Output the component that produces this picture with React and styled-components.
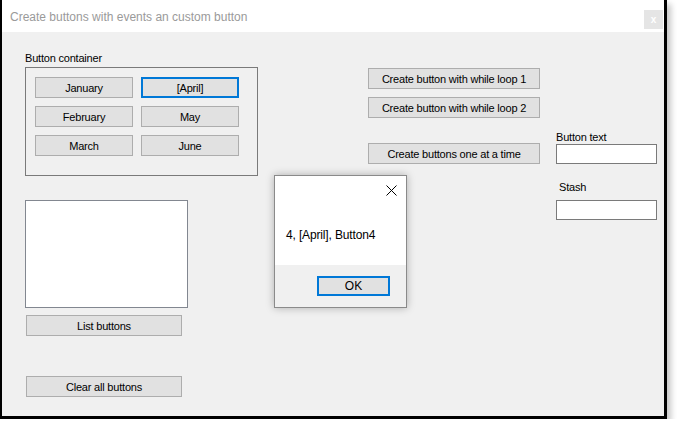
import styled, { createGlobalStyle } from 'styled-components';

const GlobalStyle = createGlobalStyle`
  body {
    margin: 0;
    background: #ffffff;
    font-family: 'Liberation Sans', Arial, sans-serif;
  }
`;

const Window = styled.div`
  position: relative;
  width: 667px;
  height: 419px;
  box-sizing: border-box;
  border-left: 2px solid #000000;
  border-right: 3px solid #000000;
  border-bottom: 3px solid #000000;
  background: #f0f0f0;
  box-shadow: 4px 4px 6px rgba(0, 0, 0, 0.22);
  display: flex;
  flex-direction: column;
`;

const TitleBar = styled.div`
  height: 32px;
  flex-shrink: 0;
  background: #ffffff;
  display: flex;
  justify-content: space-between;
  align-items: flex-start;
  padding-left: 8px;
`;

const Title = styled.div`
  padding-top: 10px;
  font-size: 12px;
  line-height: 15px;
  color: #9a9a9a;
`;

const TitleClose = styled.div`
  width: 19px;
  height: 19px;
  margin-top: 10px;
  margin-right: 1px;
  background: #e5e5e5;
  color: #ffffff;
  font-size: 10px;
  font-weight: bold;
  display: flex;
  align-items: center;
  justify-content: center;
`;

const Body = styled.div`
  flex: 1;
  display: flex;
  align-items: flex-start;
  padding-left: 23px;
  font-size: 11px;
  letter-spacing: -0.2px;
  color: #000000;
`;

const Column = styled.div`
  display: flex;
  flex-direction: column;
  align-items: flex-start;
  width: ${p => p.$width}px;
  margin-left: ${p => p.$left || 0}px;
  padding-top: ${p => p.$top || 0}px;
`;

const Label = styled.div`
  line-height: 13px;
  height: 13px;
  margin-top: ${p => p.$top || 0}px;
  padding-left: ${p => p.$indent || 0}px;
  white-space: nowrap;
`;

const GroupBox = styled.div`
  margin-top: 2px;
  width: 233px;
  height: 109px;
  box-sizing: border-box;
  border: 1px solid #7a7a7a;
  padding: 9px;
  display: grid;
  grid-template-columns: 98px 98px;
  grid-auto-rows: 21px;
  column-gap: 8px;
  row-gap: 8px;
  align-content: start;
`;

const Button = styled.div`
  box-sizing: border-box;
  height: ${p => p.$height || 21}px;
  width: ${p => (p.$width ? `${p.$width}px` : 'auto')};
  margin-top: ${p => p.$top || 0}px;
  margin-left: ${p => p.$left || 0}px;
  background: #e1e1e1;
  border: ${p => (p.$focused ? '2px solid #0078d7' : '1px solid #adadad')};
  display: flex;
  align-items: center;
  justify-content: center;
  white-space: nowrap;
`;

const ListBox = styled.div`
  margin-top: 24px;
  width: 163px;
  height: 108px;
  box-sizing: border-box;
  background: #ffffff;
  border: 1px solid #828790;
`;

const TextBox = styled.div`
  margin-top: ${p => p.$top || 0}px;
  width: 101px;
  height: 20px;
  box-sizing: border-box;
  background: #ffffff;
  border: 1px solid #7a7a7a;
`;

const Dialog = styled.div`
  position: absolute;
  left: 272px;
  top: 175px;
  width: 133px;
  height: 133px;
  box-sizing: border-box;
  border: 1px solid #8a8a8a;
  background: #f0f0f0;
  box-shadow: 0 0 8px rgba(0, 0, 0, 0.28);
  display: flex;
  flex-direction: column;
`;

const DialogTop = styled.div`
  flex: 1;
  background: #ffffff;
  padding: 9px 9px 0 11px;
`;

const CloseRow = styled.div`
  display: flex;
  justify-content: flex-end;
  height: 11px;
`;

const Message = styled.div`
  margin-top: 32px;
  font-size: 12px;
  line-height: 15px;
  letter-spacing: -0.15px;
  color: #000000;
  white-space: nowrap;
`;

const DialogFooter = styled.div`
  height: 42px;
  display: flex;
  justify-content: flex-end;
  align-items: flex-start;
  padding: 11px 16px 0 0;
  box-sizing: border-box;
`;

const OkButton = styled(Button)`
  font-size: 12px;
  letter-spacing: 0;
`;

const months = [
  { text: 'January' },
  { text: '[April]', focused: true },
  { text: 'February' },
  { text: 'May' },
  { text: 'March' },
  { text: 'June' },
];

export default function App() {
  return (
    <>
      <GlobalStyle />
      <Window>
        <TitleBar>
          <Title>Create buttons with events an custom button</Title>
          <TitleClose>x</TitleClose>
        </TitleBar>

        <Body>
          <Column $width={233}>
            <Label $top={20}>Button container</Label>
            <GroupBox>
              {months.map(m => (
                <Button key={m.text} $focused={m.focused}>{m.text}</Button>
              ))}
            </GroupBox>
            <ListBox />
            <Button $top={7} $left={1} $width={156}>List buttons</Button>
            <Button $top={40} $left={1} $width={156}>Clear all buttons</Button>
          </Column>

          <Column $width={172} $left={110} $top={36}>
            <Button $width={172}>Create button with while loop 1</Button>
            <Button $width={172} $top={8}>Create button with while loop 2</Button>
            <Button $width={172} $top={25}>Create buttons one at a time</Button>
          </Column>

          <Column $width={101} $left={16} $top={99}>
            <Label>Button text</Label>
            <TextBox />
            <Label $top={17} $indent={3}>Stash</Label>
            <TextBox $top={6} />
          </Column>
        </Body>

        <Dialog>
          <DialogTop>
            <CloseRow>
              <svg width="11" height="11" viewBox="0 0 11 11">
                <path d="M0.5 0.5 L10.5 10.5 M10.5 0.5 L0.5 10.5" stroke="#000" strokeWidth="1" fill="none" />
              </svg>
            </CloseRow>
            <Message>4, [April], Button4</Message>
          </DialogTop>
          <DialogFooter>
            <OkButton $focused $width={73} $height={20}>OK</OkButton>
          </DialogFooter>
        </Dialog>
      </Window>
    </>
  );
}
